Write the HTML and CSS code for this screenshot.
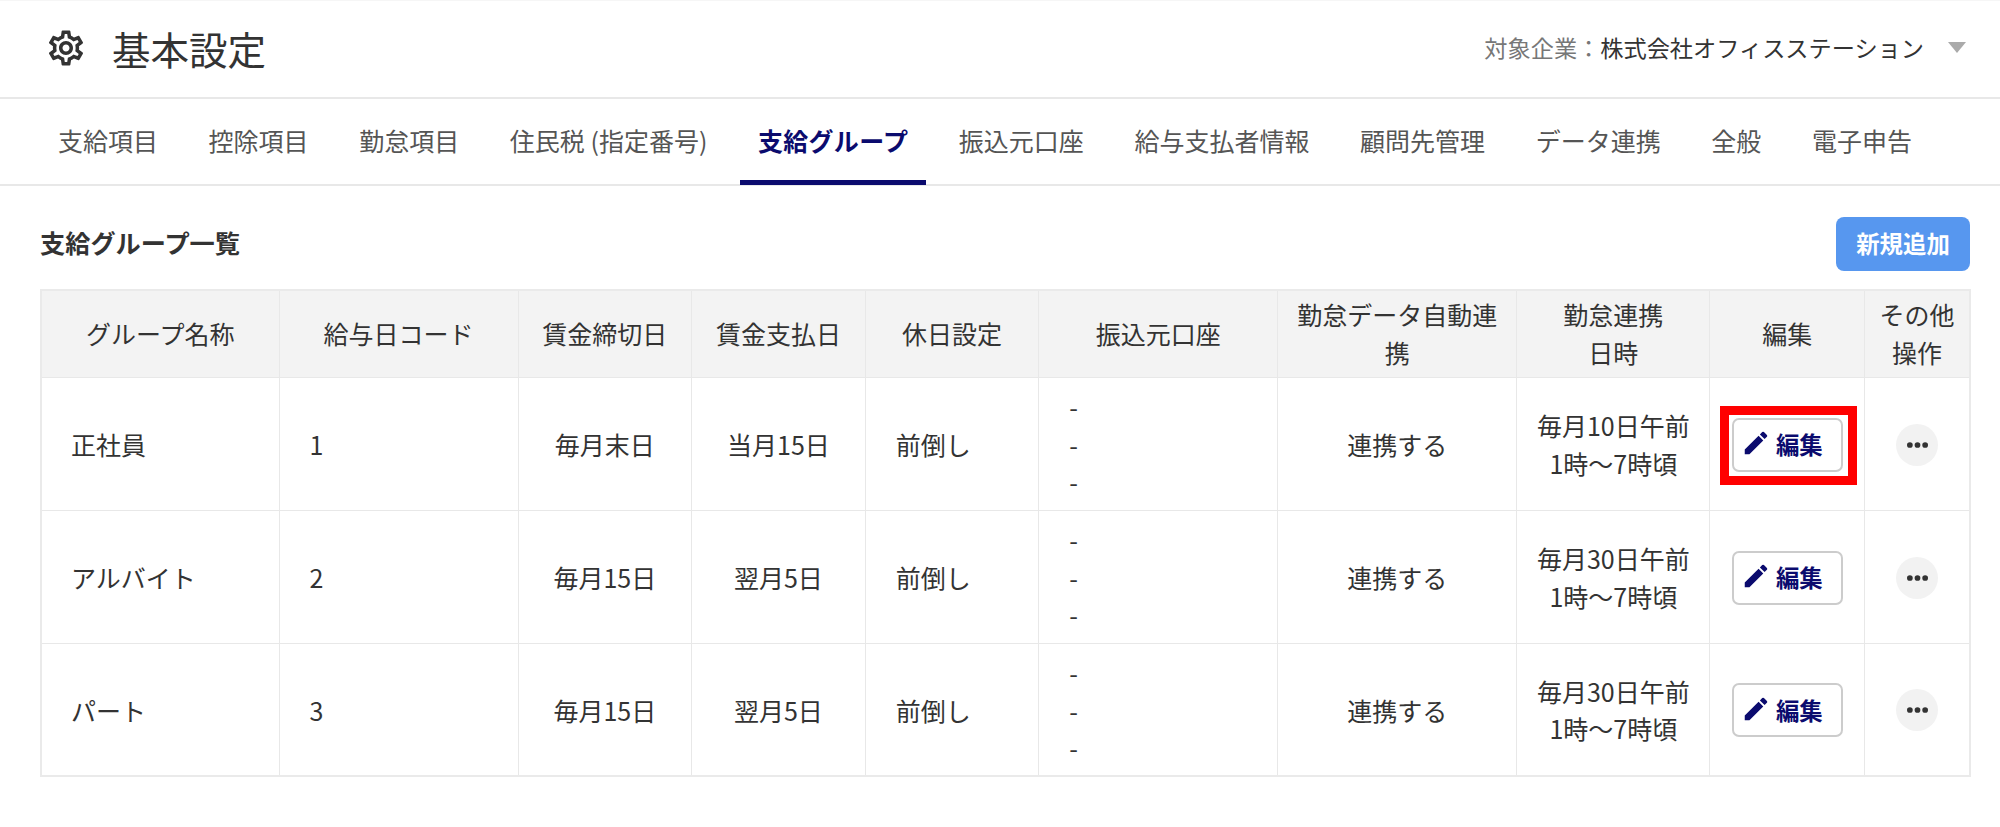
FILE: index.html
```html
<!DOCTYPE html>
<html lang="ja">
<head>
<meta charset="utf-8">
<title>基本設定</title>
<link rel="stylesheet" href="styles.css">
</head>
<body>
<header class="page-header">
  <div class="title-group">
    <svg class="gear" viewBox="0 0 24 24"><path d="M19.43 12.98c.04-.32.07-.64.07-.98 0-.34-.03-.66-.07-.98l2.11-1.65c.19-.15.24-.42.12-.64l-2-3.46c-.09-.16-.26-.25-.44-.25-.06 0-.12.01-.17.03l-2.49 1c-.52-.4-1.08-.73-1.69-.98l-.38-2.65C14.46 2.18 14.25 2 14 2h-4c-.25 0-.46.18-.49.42l-.38 2.65c-.61.25-1.17.59-1.69.98l-2.49-1c-.06-.02-.12-.03-.18-.03-.17 0-.34.09-.43.25l-2 3.46c-.13.22-.07.49.12.64l2.11 1.65c-.04.32-.07.65-.07.98 0 .33.03.66.07.98l-2.11 1.65c-.19.15-.24.42-.12.64l2 3.46c.09.16.26.25.44.25.06 0 .12-.01.17-.03l2.49-1c.52.4 1.08.73 1.69.98l.38 2.65c.03.24.24.42.49.42h4c.25 0 .46-.18.49-.42l.38-2.65c.61-.25 1.17-.59 1.69-.98l2.49 1c.06.02.12.03.18.03.17 0 .34-.09.43-.25l2-3.46c.12-.22.07-.49-.12-.64l-2.11-1.65zm-1.98-1.71c.04.31.05.52.05.73 0 .21-.02.43-.05.73l-.14 1.13.89.7 1.08.84-.7 1.21-1.27-.51-1.04-.42-.9.68c-.43.32-.84.56-1.25.73l-1.06.43-.16 1.13-.2 1.35h-1.4l-.19-1.35-.16-1.13-1.06-.43c-.43-.18-.83-.41-1.23-.71l-.91-.7-1.06.43-1.27.51-.7-1.21 1.08-.84.89-.7-.14-1.13c-.03-.31-.05-.54-.05-.74s.02-.43.05-.73l.14-1.13-.89-.7-1.08-.84.7-1.21 1.27.51 1.04.42.9-.68c.43-.32.84-.56 1.25-.73l1.06-.43.16-1.13.2-1.35h1.39l.19 1.35.16 1.13 1.06.43c.43.18.83.41 1.23.71l.91.7 1.06-.43 1.27-.51.7 1.21-1.07.85-.89.7.14 1.13zM12 8c-2.21 0-4 1.79-4 4s1.79 4 4 4 4-1.79 4-4-1.79-4-4-4zm0 6c-1.1 0-2-.9-2-2s.9-2 2-2 2 .9 2 2-.9 2-2 2z"/></svg>
    <h1 class="page-title">基本設定</h1>
  </div>
  <div class="company">
    <span class="company-label">対象企業：</span><span class="company-name">株式会社オフィスステーション</span>
    <span class="caret"></span>
  </div>
</header>
<nav class="tabs">
  <a class="tab">支給項目</a>
  <a class="tab">控除項目</a>
  <a class="tab">勤怠項目</a>
  <a class="tab">住民税 (指定番号)</a>
  <a class="tab tab-active">支給グループ</a>
  <a class="tab">振込元口座</a>
  <a class="tab">給与支払者情報</a>
  <a class="tab">顧問先管理</a>
  <a class="tab">データ連携</a>
  <a class="tab">全般</a>
  <a class="tab">電子申告</a>
</nav>
<main class="content">
  <div class="section-head">
    <h2 class="section-title">支給グループ一覧</h2>
    <button class="add-btn">新規追加</button>
  </div>
  <table class="groups">
    <colgroup>
      <col class="c-first"><col class="c-wide"><col class="c-date"><col class="c-date"><col class="c-date"><col class="c-wide"><col class="c-wide"><col class="c-time"><col class="c-edit"><col class="c-more">
    </colgroup>
    <thead>
      <tr>
        <th>グループ名称</th><th>給与日コード</th><th>賃金締切日</th><th>賃金支払日</th><th>休日設定</th><th>振込元口座</th><th>勤怠データ自動連携</th><th>勤怠連携<br>日時</th><th>編集</th><th class="tight">その他<br>操作</th>
      </tr>
    </thead>
    <tbody>
      <tr>
        <td class="left name">正社員</td><td class="left">1</td><td>毎月末日</td><td>当月15日</td><td class="left">前倒し</td><td class="left">-<br>-<br>-</td><td>連携する</td><td>毎月10日午前<br>1時～7時頃</td>
        <td><span class="edit-wrap"><button class="edit-btn"><svg class="pencil" viewBox="0 0 24 24"><path d="M3 17.25V21h3.75L17.81 9.94l-3.75-3.75L3 17.25zM20.71 7.04a1 1 0 0 0 0-1.41l-2.34-2.34a1 1 0 0 0-1.41 0l-1.83 1.83 3.75 3.75 1.83-1.83z"/></svg>編集</button><span class="highlight"></span></span></td>
        <td><span class="more"><svg class="dots" viewBox="0 0 22 6"><circle cx="3" cy="3" r="3"/><circle cx="11" cy="3" r="3"/><circle cx="19" cy="3" r="3"/></svg></span></td>
      </tr>
      <tr>
        <td class="left name">アルバイト</td><td class="left">2</td><td>毎月15日</td><td>翌月5日</td><td class="left">前倒し</td><td class="left">-<br>-<br>-</td><td>連携する</td><td>毎月30日午前<br>1時～7時頃</td>
        <td><span class="edit-wrap"><button class="edit-btn"><svg class="pencil" viewBox="0 0 24 24"><path d="M3 17.25V21h3.75L17.81 9.94l-3.75-3.75L3 17.25zM20.71 7.04a1 1 0 0 0 0-1.41l-2.34-2.34a1 1 0 0 0-1.41 0l-1.83 1.83 3.75 3.75 1.83-1.83z"/></svg>編集</button></span></td>
        <td><span class="more"><svg class="dots" viewBox="0 0 22 6"><circle cx="3" cy="3" r="3"/><circle cx="11" cy="3" r="3"/><circle cx="19" cy="3" r="3"/></svg></span></td>
      </tr>
      <tr>
        <td class="left name">パート</td><td class="left">3</td><td>毎月15日</td><td>翌月5日</td><td class="left">前倒し</td><td class="left">-<br>-<br>-</td><td>連携する</td><td>毎月30日午前<br>1時～7時頃</td>
        <td><span class="edit-wrap"><button class="edit-btn"><svg class="pencil" viewBox="0 0 24 24"><path d="M3 17.25V21h3.75L17.81 9.94l-3.75-3.75L3 17.25zM20.71 7.04a1 1 0 0 0 0-1.41l-2.34-2.34a1 1 0 0 0-1.41 0l-1.83 1.83 3.75 3.75 1.83-1.83z"/></svg>編集</button></span></td>
        <td><span class="more"><svg class="dots" viewBox="0 0 22 6"><circle cx="3" cy="3" r="3"/><circle cx="11" cy="3" r="3"/><circle cx="19" cy="3" r="3"/></svg></span></td>
      </tr>
    </tbody>
  </table>
</main>
</body>
</html>
```
FILE: styles.css
```css
* { box-sizing: border-box; }
html, body { margin: 0; padding: 0; }
body {
  width: 2000px;
  height: 827px;
  overflow: hidden;
  background: #fff;
  color: #333;
  font-family: "Noto Sans CJK JP", "Noto Sans", sans-serif;
  font-size: 25px;
  line-height: 1.5;
}
.page-header {
  height: 99px;
  display: flex;
  align-items: center;
  justify-content: space-between;
  padding: 0 34px 0 45px;
  border-top: 1px solid #f6f6f6;
  border-bottom: 2px solid #e8e8e8;
}
.title-group { display: flex; align-items: center; gap: 25px; }
.gear { width: 42px; height: 42px; fill: #333; margin-top: -3px; }
.page-title { margin: 0; font-size: 38.5px; font-weight: 400; line-height: 1.5; }
.company { display: flex; align-items: center; font-size: 23.2px; margin-top: -3px; }
.company-label { color: #777; }
.company-name { color: #333; }
.caret {
  width: 0; height: 0;
  margin-left: 24px;
  border-left: 9.5px solid transparent;
  border-right: 9.5px solid transparent;
  border-top: 11px solid #aaa;
}
.tabs {
  height: 87px;
  display: flex;
  gap: 14.6px;
  padding: 0 0 0 40px;
  border-bottom: 2px solid #e8e8e8;
}
.tab {
  display: flex;
  align-items: center;
  padding: 0 18px 2px;
  height: 86px;
  color: #555;
  white-space: nowrap;
}
.tab-active {
  color: #0b0b6e;
  font-weight: 700;
  letter-spacing: 0.3px;
  border-bottom: 5px solid #0b0b6e;
  padding-top: 3px;
  padding-bottom: 0;
}
.content { padding: 31px 30px 0 40px; }
.section-head {
  display: flex;
  align-items: center;
  justify-content: space-between;
  margin-bottom: 18px;
}
.section-title { margin: 0 0 2px; font-size: 25.2px; font-weight: 700; }
.add-btn {
  width: 134px;
  height: 54px;
  border: 0;
  border-radius: 8px;
  background: #5797ef;
  color: #fff;
  font: 700 23.4px/1.5 "Noto Sans CJK JP", sans-serif;
  padding: 0;
}
.groups {
  width: 1930px;
  table-layout: fixed;
  border-collapse: collapse;
  border: 2px solid #eaeaea;
}
.c-first { width: 238px; }
.c-wide { width: 239px; }
.c-date { width: 173.6px; }
.c-time { width: 193px; }
.c-edit { width: 155px; }
.c-more { width: 105px; }
.groups th, .groups td {
  border: 1.5px solid #e8e8e8;
  text-align: center;
  vertical-align: middle;
  padding: 0 16px;
  font-weight: 400;
}
.groups th.tight { padding: 0; }
.groups th { height: 87px; background: #f3f3f3; }
.groups td { height: 133px; padding-top: 2px; }
.groups td.left { text-align: left; padding-left: 30px; }
.groups td.name { padding-left: 29px; }
.edit-wrap { position: relative; display: inline-block; vertical-align: middle; }
.edit-btn {
  display: flex;
  align-items: center;
  justify-content: center;
  width: 111px;
  height: 54px;
  padding: 0;
  border: 2px solid #ccc;
  border-radius: 7px;
  background: #fff;
  color: #0b0b6e;
  font: 700 23.4px/1.5 "Noto Sans CJK JP", sans-serif;
}
.pencil { width: 30px; height: 30px; fill: #0b0b6e; margin: -3px 5px 0 -11px; }
.highlight {
  position: absolute;
  left: -12px; right: -14px; top: -12px; bottom: -13px;
  border: 9px solid #f00;
  pointer-events: none;
}
.more {
  display: inline-flex;
  align-items: center;
  justify-content: center;
  width: 42px;
  height: 42px;
  margin-top: -2px;
  border-radius: 50%;
  background: #f2f2f2;
  vertical-align: middle;
}
.dots { width: 21px; height: 6px; fill: #333; }
```
